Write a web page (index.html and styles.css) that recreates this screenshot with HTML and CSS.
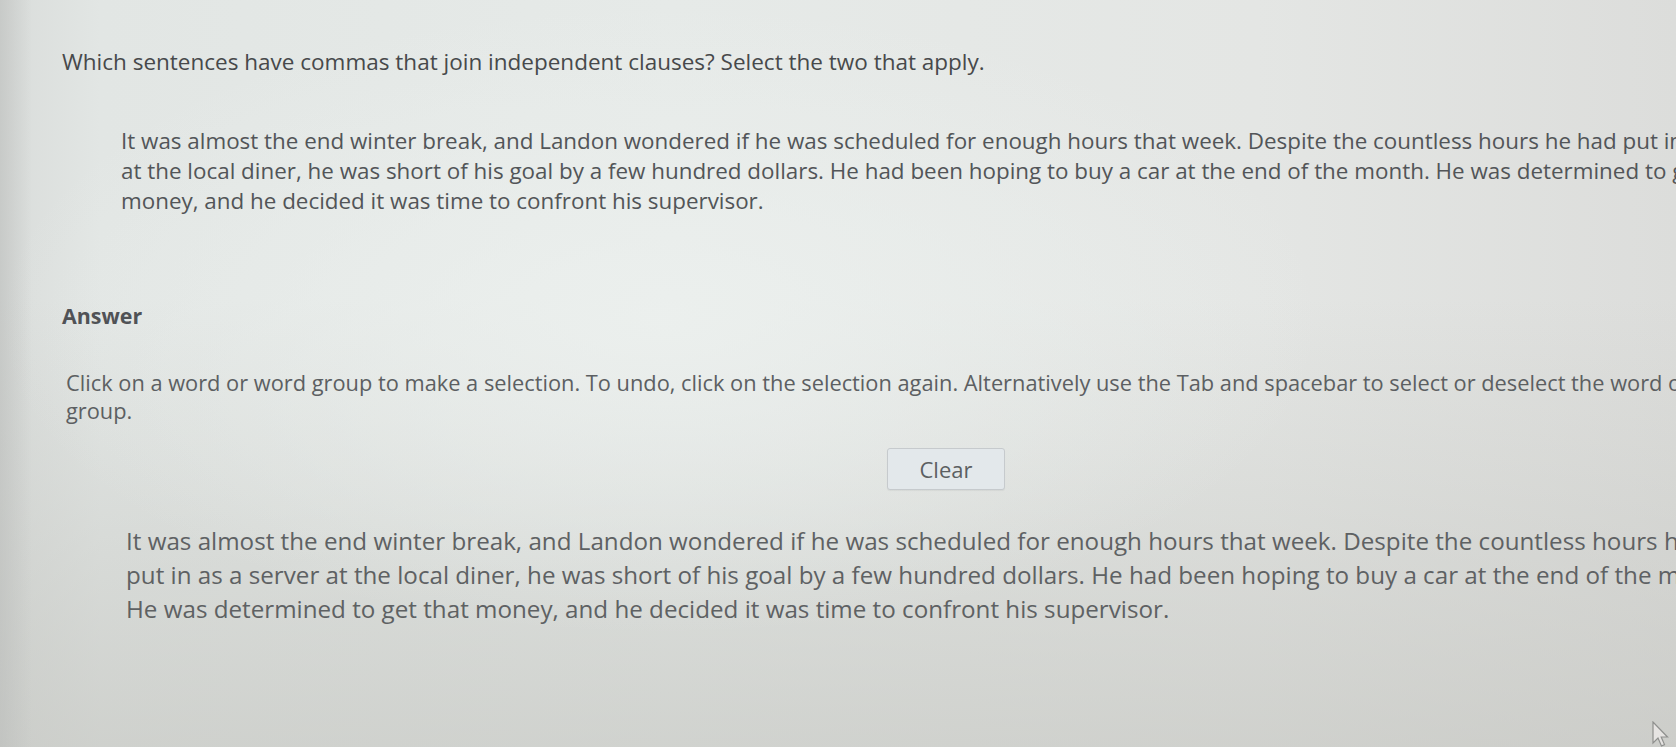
FILE: index.html
```html
<!DOCTYPE html>
<html lang="en">
<head>
<meta charset="utf-8">
<title>Question</title>
<link rel="stylesheet" href="styles.css">
</head>
<body>
<div class="screen">
  <div class="edge"></div>
  <main class="page">
    <p class="question">Which sentences have commas that join independent clauses? Select the two that apply.</p>
    <p class="passage">It was almost the end winter break, and Landon wondered if he was scheduled for enough hours that week. Despite the countless hours he had put in as a server<br>at the local diner, he was short of his goal by a few hundred dollars. He had been hoping to buy a car at the end of the month. He was determined to get that<br>money, and he decided it was time to confront his supervisor.</p>
    <h2 class="answer-title">Answer</h2>
    <p class="instructions">Click on a word or word group to make a selection. To undo, click on the selection again. Alternatively use the Tab and spacebar to select or deselect the word or<br>group.</p>
    <div class="actions"><button class="clear-btn" type="button">Clear</button></div>
    <p class="selectable">It was almost the end winter break, and Landon wondered if he was scheduled for enough hours that week. Despite the countless hours he had<br>put in as a server at the local diner, he was short of his goal by a few hundred dollars. He had been hoping to buy a car at the end of the month.<br>He was determined to get that money, and he decided it was time to confront his supervisor.</p>
  </main>
  <svg class="cursor" width="18" height="28" viewBox="0 0 18 28"><path d="M2 1 L2 22 L7 17 L10.5 25 L13.5 23.6 L10.2 16 L16.5 16 Z" fill="#e6e4e2" stroke="#8f908e" stroke-width="1.2"/></svg>
</div>
</body>
</html>
```
FILE: styles.css
```css
html, body {
  margin: 0;
  padding: 0;
  width: 100%;
  height: 100%;
  overflow: hidden;
}
body {
  font-family: "Open Sans", "Liberation Sans", sans-serif;
  color: #55585a;
}
.screen {
  position: relative;
  width: 100%;
  height: 100%;
  background:
    radial-gradient(ellipse 950px 450px at 660px 320px, rgba(236,240,238,0.9), rgba(236,240,238,0) 70%),
    linear-gradient(180deg, rgba(200,201,196,0) 0%, rgba(200,201,196,0) 40%, rgba(194,195,190,0.6) 100%),
    linear-gradient(90deg, #d9dcda 0%, #e2e6e4 6%, #e6eae8 40%, #e4e6e4 75%, #dcdddb 100%);
  overflow: hidden;
}
.edge {
  position: absolute;
  left: 0;
  top: 0;
  bottom: 0;
  width: 32px;
  background: linear-gradient(90deg, rgba(188,190,188,0.6), rgba(210,212,210,0));
}
.page {
  position: relative;
  padding-left: 62px;
}
p, h2 { margin: 0; }
.question {
  padding-top: 47px;
  font-size: 22.5px;
  line-height: 30px;
  color: #47494b;
  white-space: nowrap;
}
.passage {
  margin-top: 49px;
  margin-left: 59px;
  font-size: 22.4px;
  line-height: 30px;
  white-space: nowrap;
  color: #525558;
}
.answer-title {
  margin-top: 86px;
  font-size: 21.4px;
  line-height: 28px;
  font-weight: 700;
  color: #505256;
}
.instructions {
  margin-top: 39px;
  margin-left: 4px;
  font-size: 21.8px;
  line-height: 28px;
  white-space: nowrap;
  color: #5c5f62;
}
.actions {
  margin-top: 23px;
  padding-left: 825px;
}
.clear-btn {
  width: 118px;
  height: 42px;
  border: 1px solid #c6cacd;
  border-radius: 3px;
  background: #e3e8eb;
  font-family: "Open Sans", "Liberation Sans", sans-serif;
  font-size: 22px;
  color: #5c5f62;
  padding: 0;
  box-shadow: 0 1px 1px rgba(0,0,0,0.05);
}
.selectable {
  margin-top: 34px;
  margin-left: 64px;
  font-size: 24.2px;
  line-height: 34px;
  white-space: nowrap;
  color: #5e6163;
}
.cursor {
  position: absolute;
  left: 1651px;
  top: 721px;
}
```
